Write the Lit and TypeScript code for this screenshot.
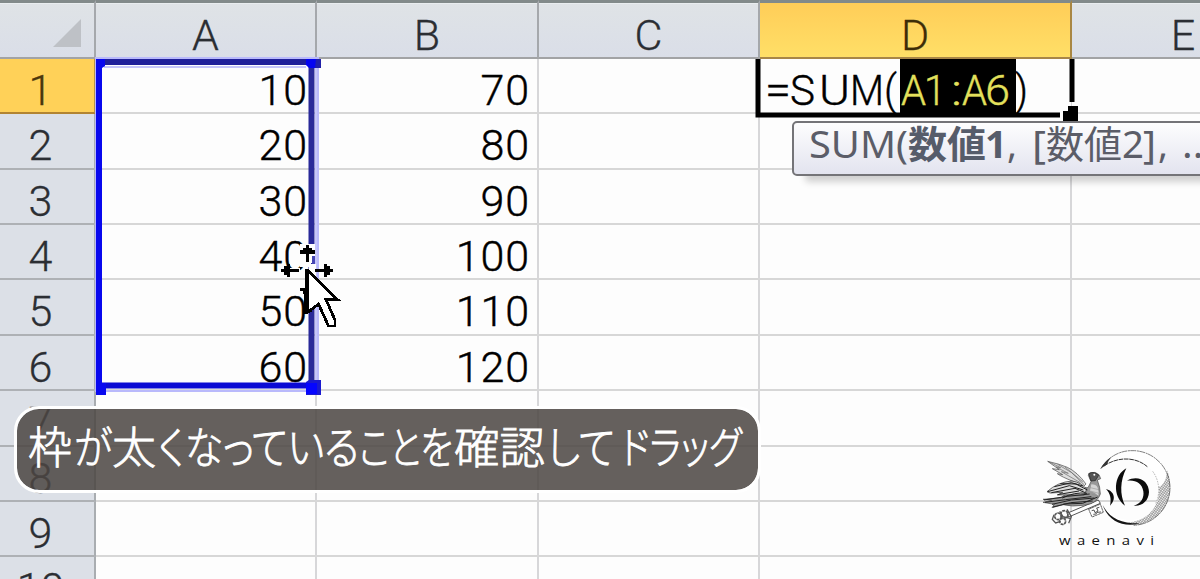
import { LitElement, html, svg, css } from 'lit';
import { customElement, property } from 'lit/decorators.js';
import { classMap } from 'lit/directives/class-map.js';

const COLUMNS = ['A', 'B', 'C', 'D', 'E'];
const ROWS = [1, 2, 3, 4, 5, 6, 7, 8, 9, 10];
const VALUES: Record<string, number[]> = {
  A: [10, 20, 30, 40, 50, 60],
  B: [70, 80, 90, 100, 110, 120],
};

// text, x, width
type Piece = [string, number, number, string?];

const FORMULA: Piece[] = [
  ['=', 4, 26],
  ['S', 29, 25],
  ['U', 58, 31],
  ['M', 89, 34],
  ['(', 123, 13],
  ['A', 140, 25, 'picked'],
  ['1', 163, 22, 'picked'],
  [':', 190, 11, 'picked'],
  ['A', 201, 25, 'picked'],
  ['6', 224, 25, 'picked'],
  [')', 254, 13],
];

const HINT: Piece[] = [
  ['SUM(', 15, 99],
  ['数値', 114, 78, 'bold'],
  ['1', 191, 22, 'bold'],
  [',', 213, 10],
  ['[', 238, 14],
  ['数値', 252, 76],
  ['2', 328, 22],
  [']', 349, 13],
  [',', 364, 10],
  ['...', 388, 32],
];

const CAPTION: Piece[] = [
  ['枠', 11, 44],
  ['が', 57, 38],
  ['太', 95, 44],
  ['くなっている', 141, 201],
  ['ことを', 342, 94],
  ['確認', 437, 91],
  ['して', 530, 68],
  ['ドラッグ', 604, 121],
];

const drawPieces = (pieces: Piece[], y: number) =>
  pieces.map(
    ([text, x, width, name]) => svg`
      <text class=${name ?? ''} x=${x} y=${y} textLength=${width} lengthAdjust="spacingAndGlyphs">${text}</text>`
  );

@customElement('range-box')
class RangeBox extends LitElement {
  static styles = css`
    :host {
      display: block;
    }
    svg {
      display: block;
    }
  `;

  render() {
    return html`
      <svg width="230" height="342" viewBox="94 56 230 342">
        <path d="M96 58H318V391H96Z" fill="none" stroke="#b9b9fb" stroke-width="2" />
        <path d="M316 68V380M104 67H306" stroke="#c5c5fa" stroke-width="2" />
        <path d="M96 62H320" stroke="#20209a" stroke-width="6" />
        <path d="M311.5 66V384" stroke="#292999" stroke-width="6" />
        <path d="M99 60V390" stroke="#0808ee" stroke-width="6" />
        <path d="M100 385.5H310" stroke="#0b0bd4" stroke-width="6" />
        <path d="M96 59H105V66L102 68H96Z" fill="#0808ee" />
        <path d="M306 59H316V68H309L306 65Z" fill="#0505f0" />
        <path d="M316 59H321V68H315Z" fill="#2020a8" />
        <path d="M96 380H102V383H106V395H96Z" fill="#0808f0" />
        <path d="M306 382L309 380H321V395H306Z" fill="#1a1ad0" />
        <path d="M306 383H317V394H306Z" fill="#0505ff" />
      </svg>
    `;
  }
}

@customElement('move-pointer')
class MovePointer extends LitElement {
  static styles = css`
    :host {
      display: block;
    }
    svg {
      display: block;
    }
  `;

  render() {
    return html`
      <svg width="66" height="90" viewBox="276 242 66 90" shape-rendering="crispEdges">
        <path d="M300 244H315V263H311V267H300ZM309 264H316V276H309Z" fill="#fdfdfd" />
        <path d="M312 256H315V264H312Z" fill="#4545b5" />
        <path d="M281 268H300V272H281Z" fill="#fdfdfd" />
        <g fill="#000">
          <path d="M306 245H309V248H312V250H315V254H309V262H306V254H300V250H303V248H306Z" />
          <path d="M281 269H284V266H287V264H290V269H299V272H290V277H287V275H284V272H281Z" />
          <path d="M315 269H324V264H327V266H330V269H333V272H330V275H327V277H324V272H315Z" />
          <path d="M300 288H306V294H303V291H300Z" />
        </g>
        <path
          d="M308 271L337.5 299.5H326L335 320V326H328.5L318.5 304L308 312Z"
          fill="#fff"
          stroke="#000"
          stroke-width="2.8"
        />
        <path d="M305 269H309V309H312V312H308V314H304Z" fill="#000" />
      </svg>
    `;
  }
}

@customElement('waenavi-logo')
class WaenaviLogo extends LitElement {
  static styles = css`
    :host {
      display: block;
    }
    svg {
      display: block;
    }
    text {
      font-family: 'Open Sans', 'Noto Sans', sans-serif;
      font-size: 40px;
      letter-spacing: 17px;
      fill: #111;
    }
  `;

  render() {
    return html`
      <svg width="150" height="120" viewBox="0 0 450 360">
        <defs>
          <pattern id="hatch" width="6" height="6" patternUnits="userSpaceOnUse" patternTransform="rotate(35)">
            <path d="M0 1H6M1 0V6" stroke="#555" stroke-width="1.5" />
          </pattern>
        </defs>

        <!-- crescent -->
        <path
          d="M212 86C240 43 278 30 314 32C376 36 421 87 420 147C417 207 371 253 311 256C270 255 237 234 220 198C243 230 272 241 306 240C357 235 387 199 384 150C382 116 369 91 348 76C318 51 260 51 212 86Z"
          fill="#fff"
        />
        <path
          d="M411 91C421 113 423 144 418 167C409 211 367 249 323 255L285 249C351 246 394 199 386 141C402 137 411 112 411 91Z"
          fill="url(#hatch)"
        />
        <path
          d="M212 86C240 43 278 30 314 32C376 36 421 87 420 147C417 207 371 253 311 256"
          fill="none"
          stroke="#444"
          stroke-width="2"
          stroke-dasharray="18 2 6 1"
        />
        <path d="M222 78C260 51 315 48 352 80" fill="none" stroke="#333" stroke-width="3" stroke-dasharray="14 2" />
        <path d="M368 94C390 123 391 164 376 193" fill="none" stroke="#777" stroke-width="1.5" stroke-dasharray="5 3" />
        <path d="M212 86Q221 66 244 51Q235 62 231 73Z" fill="#333" />
        <path d="M218 195C239 235 272 251 330 250C284 264 236 246 218 195Z" fill="#151515" />

        <!-- mark inside the crescent -->
        <g fill="#0c0c0c">
          <path d="M228 147C250 152 262 175 240 197C245 177 241 160 228 147Z" />
          <path d="M289 85C251 105 246 169 285 197C269 164 270 122 289 85Z" />
          <path d="M291 122C324 103 357 123 357 156C356 184 334 200 311 197C333 191 343 174 340 154C336 130 318 119 291 122Z" />
        </g>

        <!-- key -->
        <g fill="none" stroke="#333" stroke-width="2.5">
          <path d="M111 220L205 180L211 190L116 231Z" fill="#fff" />
          <path d="M176 208L211 192L220 217L186 231Z" fill="#fff" stroke-dasharray="4 1" />
          <path d="M185 212L192 210L195 218L204 213L200 204L208 202M190 223L198 222L201 217L213 216" />
          <g stroke="#555">
            <circle cx="84" cy="229" r="10" stroke-width="5" stroke-dasharray="9 2" />
            <circle cx="98" cy="244" r="9" stroke-width="5" stroke-dasharray="9 2" />
            <circle cx="103" cy="223" r="11" stroke-width="5" stroke-dasharray="9 2" />
            <path d="M72 224L67 238L77 249L92 244M89 214L99 230L120 235M111 208L124 230L116 250" stroke-width="4" />
          </g>
        </g>

        <!-- bird -->
        <g stroke="#222" stroke-linejoin="round">
          <path
            d="M53 64Q89 72 112 82Q142 96 168 132L157 143L129 124Q96 111 82 101L98 104L67 86L88 89Z"
            fill="#ddd"
            stroke="#444"
            stroke-width="2"
          />
          <path
            d="M58 66L92 83L78 81L115 100L94 95L151 128M83 73L125 98L162 134M105 81L158 125"
            fill="none"
            stroke="#666"
            stroke-width="2"
          />
          <path
            d="M175 106L179 99Q196 93 207 104L212 116L202 120Q211 142 211 162Q204 182 183 191L159 196Q127 201 99 194L66 203L73 193L39 187L65 181L39 178L93 173Q132 139 174 143L183 125Z"
            fill="#999"
            stroke="#444"
            stroke-width="2"
          />
          <path
            d="M51 155Q83 126 126 123Q154 127 170 148L163 165Q120 164 83 165L98 157L60 159Z"
            fill="#ddd"
            stroke-width="2"
          />
          <path
            d="M53 155L118 137L160 150M64 158L135 145L166 158M82 164L147 153M73 140L124 128L159 138M91 131L138 132L172 150"
            fill="none"
            stroke-width="3"
          />
          <path
            d="M42 180L112 169L179 162M45 187L107 179L184 170M66 193L124 180L193 174M69 201L122 188L188 183M100 192L158 190L203 171M97 174Q134 155 171 160"
            fill="none"
            stroke-width="3"
          />
          <path d="M184 133Q198 133 203 143Q208 158 205 167Q195 156 180 153Z" fill="#d5d5d5" stroke="none" />
          <path d="M181 143L206 149M181 153L207 160M185 163L205 168" fill="none" stroke="#888" stroke-width="1.5" />
          <path d="M176 101Q192 92 206 106L196 122L183 123Z" fill="#555" stroke-width="2" />
          <circle cx="193" cy="104" r="3" fill="#fff" stroke="none" />
        </g>

        <text x="87" y="314" textLength="304" lengthAdjust="spacingAndGlyphs">waenavi</text>
      </svg>
    `;
  }
}

@customElement('sheet-cell')
class SheetCell extends LitElement {
  @property() value = '';

  static styles = css`
    :host {
      display: flex;
      justify-content: flex-end;
      align-items: flex-start;
      box-sizing: border-box;
      padding-right: 7px;
      border-right: 2px solid #d7d7d9;
      border-bottom: 2px solid #d7d7d7;
      background: #fdfdfd;
      color: #000;
      font: 300 43px/63px Roboto, 'Liberation Sans', sans-serif;
      letter-spacing: 0.9px;
      -webkit-text-stroke: 0.4px;
      white-space: nowrap;
    }
  `;

  render() {
    return html`<span>${this.value}</span>`;
  }
}

@customElement('app-root')
class AppRoot extends LitElement {
  static styles = css`
    :host {
      display: block;
      position: relative;
      width: 1200px;
      height: 579px;
      overflow: hidden;
      background: #fdfdfd;
    }
    svg {
      display: block;
    }
    .sheet {
      display: grid;
      grid-template-columns: 96px 221px 222px 221px 312px 224px;
      grid-template-rows: 59px 55px 56px 55px 55px 56px 55px 56px 55px 55px 55px;
    }
    .head {
      box-sizing: border-box;
      display: flex;
      justify-content: center;
      background: #dce0e7;
      color: #2b2e33;
      font: 300 43px/63px Roboto, 'Liberation Sans', sans-serif;
      -webkit-text-stroke: 0.3px;
      border-right: 2px solid #a9adb1;
      border-bottom: 2px solid #aeb1b5;
    }
    .column {
      border-top: 3px solid #828a8a;
      border-right-color: #a5a8ac;
      border-bottom-color: #a2a3a5;
      background: linear-gradient(#dfe3e6, #dadee8);
      line-height: 64px;
      box-shadow: inset 0 1px #e9edef;
    }
    .row {
      padding-right: 13px;
    }
    .column.active {
      background: linear-gradient(#ffcd58, #ffdf67);
      border-right-color: #a98743;
      border-bottom-color: #a88647;
      color: #3d2d08;
      box-shadow: none;
    }
    .row.active {
      background: #ffd158;
      border-right-color: #b79248;
      border-bottom-color: #b28432;
      color: #4c370c;
    }
    .corner {
      justify-content: flex-end;
      align-items: flex-end;
      padding: 0 13px 10px 0;
    }
    .overlay {
      position: absolute;
    }
    .range {
      left: 94px;
      top: 56px;
    }
    .pointer {
      left: 276px;
      top: 242px;
    }
    .logo {
      left: 1030px;
      top: 440px;
    }
    .editor {
      left: 754px;
      top: 59px;
    }
    .editor text {
      font: 300 43px Roboto, 'Liberation Sans', sans-serif;
      fill: #000;
      stroke: #000;
      stroke-width: 0.4px;
    }
    .editor .picked {
      fill: #e3e05c;
      stroke: #e3e05c;
    }
    .hint {
      left: 792px;
      top: 121px;
      box-sizing: border-box;
      width: 430px;
      height: 55px;
      border: 2px solid #747478;
      border-radius: 5px;
      background: linear-gradient(#fdfdfe, #e3e4ef);
      box-shadow: 12px 7px 7px -1px rgba(0, 0, 0, 0.18);
    }
    .hint text {
      font: 400 38px 'Noto Sans', 'Noto Sans CJK JP', sans-serif;
      fill: #5b5d68;
    }
    .hint .bold {
      font-weight: 700;
      fill: #565c6a;
    }
    .caption {
      left: 14px;
      top: 406px;
      box-sizing: border-box;
      width: 747px;
      height: 87px;
      border: 3px solid #fff;
      border-radius: 25px;
      background: rgba(76, 70, 66, 0.86);
      background-clip: padding-box;
    }
    .caption text {
      font: 300 44px 'Noto Sans CJK JP', sans-serif;
      font-feature-settings: 'palt';
      fill: #fff;
      stroke: #fff;
      stroke-width: 0.8px;
    }
  `;

  cellValue(column: string, row: number) {
    return VALUES[column]?.[row - 1] ?? '';
  }

  renderRow(row: number) {
    return html`
      <div class=${classMap({ head: true, row: true, active: row === 1 })}>${row}</div>
      ${COLUMNS.map((column) => html`<sheet-cell .value=${String(this.cellValue(column, row))}></sheet-cell>`)}
    `;
  }

  render() {
    return html`
      <div class="sheet">
        <div class="head column corner">
          <svg width="28" height="28" viewBox="0 0 28 28"><path d="M28 0V28H0Z" fill="#bec1c6" /></svg>
        </div>
        ${COLUMNS.map(
          (column) => html`<div class=${classMap({ head: true, column: true, active: column === 'D' })}>${column}</div>`
        )}
        ${ROWS.map((row) => this.renderRow(row))}
      </div>

      <div class="overlay range"><range-box></range-box></div>

      <div class="overlay hint">
        <svg width="426" height="51">${drawPieces(HINT, 35)}</svg>
      </div>

      <div class="overlay editor">
        <svg width="330" height="64" viewBox="-1 0 330 64">
          <rect x="2" width="314" height="56" fill="#fdfdfd" />
          <path d="M3 0V56H305" fill="none" stroke="#000" stroke-width="5" />
          <path d="M317 0V43" stroke="#000" stroke-width="5" />
          <path d="M308 52H313V47H323V62H308Z" fill="#000" />
          <rect x="145" width="116" height="54" fill="#000" />
          <g transform="translate(6 0)">${drawPieces(FORMULA, 46)}</g>
        </svg>
      </div>

      <div class="overlay caption">
        <svg width="741" height="81">${drawPieces(CAPTION, 55)}</svg>
      </div>

      <div class="overlay pointer"><move-pointer></move-pointer></div>
      <div class="overlay logo"><waenavi-logo></waenavi-logo></div>
    `;
  }
}
